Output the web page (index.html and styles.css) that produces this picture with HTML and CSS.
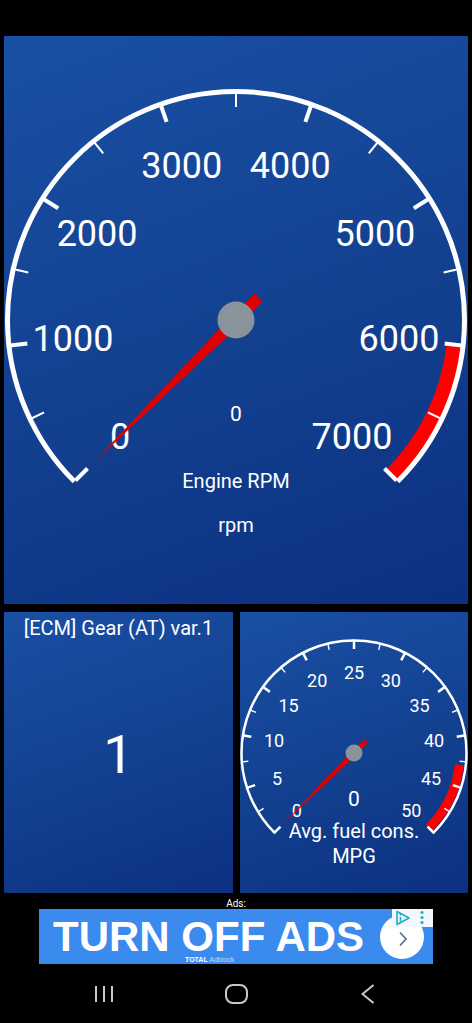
FILE: index.html
```html
<!DOCTYPE html>
<html lang="en">
<head>
<meta charset="utf-8">
<title>Dashboard</title>
<link rel="stylesheet" href="styles.css">
</head>
<body>
<div class="status"></div>
<main class="dash">
  <section class="panel panel-main">
    <svg class="gauge" viewBox="0 0 464 568" width="464" height="568">
      <path class="band band-lg" d="M450.12 308.57 A219.5 219.5 0 0 1 387.21 439.21"/>
      <path class="arc arc-lg" d="M70.43 445.57 A228.5 228.5 0 1 1 393.57 445.57"/>
      <g class="tick-major-lg">
        <line x1="232" y1="57" x2="232" y2="74" transform="rotate(-135 232 284)"/>
        <line x1="232" y1="57" x2="232" y2="74" transform="rotate(-96.43 232 284)"/>
        <line x1="232" y1="57" x2="232" y2="74" transform="rotate(-57.86 232 284)"/>
        <line x1="232" y1="57" x2="232" y2="74" transform="rotate(-19.29 232 284)"/>
        <line x1="232" y1="57" x2="232" y2="74" transform="rotate(19.29 232 284)"/>
        <line x1="232" y1="57" x2="232" y2="74" transform="rotate(57.86 232 284)"/>
        <line x1="232" y1="57" x2="232" y2="74" transform="rotate(96.43 232 284)"/>
        <line x1="232" y1="57" x2="232" y2="74" transform="rotate(135 232 284)"/>
      </g>
      <g class="tick-minor-lg">
        <line x1="232" y1="57.5" x2="232" y2="71" transform="rotate(-115.71 232 284)"/>
        <line x1="232" y1="57.5" x2="232" y2="71" transform="rotate(-77.14 232 284)"/>
        <line x1="232" y1="57.5" x2="232" y2="71" transform="rotate(-38.57 232 284)"/>
        <line x1="232" y1="57.5" x2="232" y2="71" transform="rotate(0 232 284)"/>
        <line x1="232" y1="57.5" x2="232" y2="71" transform="rotate(38.57 232 284)"/>
        <line x1="232" y1="57.5" x2="232" y2="71" transform="rotate(77.14 232 284)"/>
        <line x1="232" y1="57.5" x2="232" y2="71" transform="rotate(115.71 232 284)"/>
      </g>
      <g class="label-lg">
        <text x="116" y="413">0</text>
        <text x="69" y="315.4">1000</text>
        <text x="93.1" y="209.7">2000</text>
        <text x="177.8" y="142.2">3000</text>
        <text x="286.2" y="142.2">4000</text>
        <text x="370.9" y="209.7">5000</text>
        <text x="395" y="315.4">6000</text>
        <text x="348" y="413">7000</text>
      </g>
      <text class="value-lg" x="232" y="384.5">0</text>
      <text class="caption" x="232" y="452">Engine RPM</text>
      <text class="caption" x="232" y="496">rpm</text>
      <polygon class="needle" points="226,284 232,78 238,284 237.5,316 226.5,316" transform="rotate(-135 232 284)"/>
      <circle class="hub" cx="232" cy="284" r="18.5"/>
    </svg>
  </section>
  <div class="row">
    <section class="panel panel-gear">
      <div class="gear-title">[ECM] Gear (AT) var.1</div>
      <div class="gear-value">1</div>
    </section>
    <section class="panel panel-fuel">
      <svg class="gauge" viewBox="0 0 228 281" width="228" height="281">
        <path class="band band-sm" d="M219.33 152.87 A106 106 0 0 1 188.95 215.95"/>
        <path class="arc arc-sm" d="M34.45 220.55 A112.5 112.5 0 1 1 193.55 220.55"/>
        <g class="tick-major-sm">
          <line x1="114" y1="27.5" x2="114" y2="37" transform="rotate(-135 114 141)"/>
          <line x1="114" y1="27.5" x2="114" y2="37" transform="rotate(-108 114 141)"/>
          <line x1="114" y1="27.5" x2="114" y2="37" transform="rotate(-81 114 141)"/>
          <line x1="114" y1="27.5" x2="114" y2="37" transform="rotate(-54 114 141)"/>
          <line x1="114" y1="27.5" x2="114" y2="37" transform="rotate(-27 114 141)"/>
          <line x1="114" y1="27.5" x2="114" y2="37" transform="rotate(0 114 141)"/>
          <line x1="114" y1="27.5" x2="114" y2="37" transform="rotate(27 114 141)"/>
          <line x1="114" y1="27.5" x2="114" y2="37" transform="rotate(54 114 141)"/>
          <line x1="114" y1="27.5" x2="114" y2="37" transform="rotate(81 114 141)"/>
          <line x1="114" y1="27.5" x2="114" y2="37" transform="rotate(108 114 141)"/>
          <line x1="114" y1="27.5" x2="114" y2="37" transform="rotate(135 114 141)"/>
        </g>
        <g class="tick-minor-sm">
          <line x1="114" y1="28" x2="114" y2="35" transform="rotate(-121.5 114 141)"/>
          <line x1="114" y1="28" x2="114" y2="35" transform="rotate(-94.5 114 141)"/>
          <line x1="114" y1="28" x2="114" y2="35" transform="rotate(-67.5 114 141)"/>
          <line x1="114" y1="28" x2="114" y2="35" transform="rotate(-40.5 114 141)"/>
          <line x1="114" y1="28" x2="114" y2="35" transform="rotate(-13.5 114 141)"/>
          <line x1="114" y1="28" x2="114" y2="35" transform="rotate(13.5 114 141)"/>
          <line x1="114" y1="28" x2="114" y2="35" transform="rotate(40.5 114 141)"/>
          <line x1="114" y1="28" x2="114" y2="35" transform="rotate(67.5 114 141)"/>
          <line x1="114" y1="28" x2="114" y2="35" transform="rotate(94.5 114 141)"/>
          <line x1="114" y1="28" x2="114" y2="35" transform="rotate(121.5 114 141)"/>
        </g>
        <g class="label-sm">
          <text x="56.7" y="204.8">0</text>
          <text x="37" y="172.5">5</text>
          <text x="34" y="134.8">10</text>
          <text x="48.5" y="99.9">15</text>
          <text x="77.2" y="75.3">20</text>
          <text x="114" y="66.5">25</text>
          <text x="150.8" y="75.3">30</text>
          <text x="179.5" y="99.9">35</text>
          <text x="194" y="134.8">40</text>
          <text x="191" y="172.5">45</text>
          <text x="171.3" y="204.8">50</text>
        </g>
        <text class="value-sm" x="114" y="193.5">0</text>
        <text class="caption" x="114" y="226">Avg. fuel cons.</text>
        <text class="caption" x="114" y="251">MPG</text>
        <polygon class="needle" points="111,141 114,42 117,141 116.5,158 111.5,158" transform="rotate(-135 114 141)"/>
        <circle class="hub" cx="114" cy="141" r="8.5"/>
      </svg>
    </section>
  </div>
</main>
<div class="ads">
  <div class="ads-label">Ads:</div>
  <div class="banner">
    <span class="banner-text">TURN OFF ADS</span>
    <span class="banner-go">
      <svg class="chevron" viewBox="0 0 10 16" width="10" height="16"><polyline points="2,1.5 8,8 2,14.5"/></svg>
    </span>
    <span class="adchoices">
      <svg class="adchoices-icon" viewBox="0 0 41 18" width="41" height="18">
        <path class="ac-tri" d="M5 2.5 L17 9 L5 15.5 Z"/>
        <line class="ac-i" x1="8.5" y1="8" x2="8.5" y2="12.5"/>
        <circle class="ac-dot" cx="8.5" cy="5.8" r="1"/>
        <circle class="ac-dot" cx="30" cy="3.5" r="1.6"/>
        <circle class="ac-dot" cx="30" cy="8.5" r="1.6"/>
        <circle class="ac-dot" cx="30" cy="13.5" r="1.6"/>
      </svg>
    </span>
    <span class="banner-brand"><b>TOTAL</b> Adblock</span>
  </div>
</div>
<nav class="navbar">
  <span class="nav-item">
    <svg viewBox="0 0 20 18" width="20" height="18"><line x1="2" y1="1" x2="2" y2="17"/><line x1="10" y1="1" x2="10" y2="17"/><line x1="18" y1="1" x2="18" y2="17"/></svg>
  </span>
  <span class="nav-item">
    <svg viewBox="0 0 23 20" width="23" height="20"><rect x="1" y="1" width="21" height="18" rx="7" ry="7"/></svg>
  </span>
  <span class="nav-item">
    <svg viewBox="0 0 14 20" width="14" height="20"><polyline points="12.5,1 1.5,10 12.5,19"/></svg>
  </span>
</nav>
</body>
</html>
```
FILE: styles.css
```css
html, body {
  margin: 0;
  padding: 0;
  background: #000;
}

body {
  width: 472px;
  height: 1023px;
  overflow: hidden;
  font-family: Roboto, "Noto Sans", sans-serif;
  color: #fff;
}

.status {
  height: 36px;
}

.dash {
  padding: 0 4px;
  display: flex;
  flex-direction: column;
  gap: 8px;
}

.panel {
  background: linear-gradient(160deg, #1a4fa4 0%, #12408f 55%, #0c3080 100%);
  overflow: hidden;
}

.panel-main {
  height: 568px;
}

.gauge {
  display: block;
}

.row {
  display: grid;
  grid-template-columns: 229px 228px;
  gap: 7px;
  height: 281px;
}

.panel-gear {
  display: flex;
  flex-direction: column;
  align-items: center;
}

.gear-title {
  font-size: 20px;
  line-height: 24px;
  padding-top: 4px;
  white-space: nowrap;
}

.gear-value {
  flex: 1;
  display: flex;
  align-items: center;
  justify-content: center;
  font-size: 54px;
  padding-top: 4px;
  padding-bottom: 28px;
}

/* gauge parts */
.arc {
  fill: none;
  stroke: #fff;
}
.arc-lg { stroke-width: 5; }
.arc-sm { stroke-width: 2.5; }

.band {
  fill: none;
  stroke: #ff0000;
}
.band-lg { stroke-width: 15; }
.band-sm { stroke-width: 9; }

.tick-major-lg line { stroke: #fff; stroke-width: 4; }
.tick-minor-lg line { stroke: #fff; stroke-width: 2; }
.tick-major-sm line { stroke: #fff; stroke-width: 2.5; }
.tick-minor-sm line { stroke: #fff; stroke-width: 1.4; }

.label-lg text {
  font-family: Roboto, sans-serif;
  font-size: 36px;
  fill: #fff;
  text-anchor: middle;
}
.label-sm text {
  font-family: Roboto, sans-serif;
  font-size: 18px;
  fill: #fff;
  text-anchor: middle;
}

.value-lg {
  font-family: Roboto, sans-serif;
  font-size: 21px;
  fill: #fff;
  text-anchor: middle;
}
.value-sm {
  font-family: Roboto, sans-serif;
  font-size: 21px;
  fill: #fff;
  text-anchor: middle;
}

.caption {
  font-family: Roboto, sans-serif;
  font-size: 20px;
  fill: #fff;
  text-anchor: middle;
}

.needle {
  fill: #e00000;
}

.hub {
  fill: #8a929c;
}

/* ads */
.ads {
  height: 71px;
}

.ads-label {
  height: 16px;
  box-sizing: border-box;
  padding-top: 5px;
  font-size: 10px;
  line-height: 11px;
  text-align: center;
  color: #fff;
}

.banner {
  position: relative;
  width: 394px;
  height: 55px;
  margin: 0 auto;
  box-sizing: border-box;
  padding-left: 14px;
  background: #3b8aed;
  display: flex;
  align-items: center;
}

.banner-text {
  font-family: "Liberation Sans", Arial, sans-serif;
  font-weight: 700;
  font-size: 42px;
  line-height: 32px;
  color: #fff;
  white-space: nowrap;
}

.banner-go {
  width: 44px;
  height: 44px;
  margin-left: 16px;
  border-radius: 50%;
  background: #fff;
  display: flex;
  align-items: center;
  justify-content: center;
}

.chevron {
  margin-top: 5px;
  margin-left: 2px;
}
.chevron polyline {
  fill: none;
  stroke: #4d6b96;
  stroke-width: 1.6;
}

.adchoices {
  position: absolute;
  top: 0;
  right: 0;
  width: 41px;
  height: 18px;
  background: #f3f6fa;
}
.adchoices-icon {
  display: block;
}
.ac-tri {
  fill: none;
  stroke: #18b2c4;
  stroke-width: 1.6;
  stroke-linejoin: round;
}
.ac-i {
  stroke: #18b2c4;
  stroke-width: 1.6;
}
.ac-dot {
  fill: #18b2c4;
}

.banner-brand {
  position: absolute;
  left: 146px;
  bottom: 0;
  font-family: "Liberation Sans", Arial, sans-serif;
  font-size: 7px;
  line-height: 8px;
  color: #c9d9f2;
  white-space: nowrap;
}
.banner-brand b {
  color: #fff;
}

/* nav */
.navbar {
  height: 59px;
  display: flex;
  justify-content: center;
  align-items: center;
}

.nav-item {
  width: 132px;
  display: flex;
  justify-content: center;
  align-items: center;
}

.nav-item svg {
  display: block;
}
.nav-item line,
.nav-item rect,
.nav-item polyline {
  fill: none;
  stroke: #c9c9c9;
  stroke-width: 2;
}
```
